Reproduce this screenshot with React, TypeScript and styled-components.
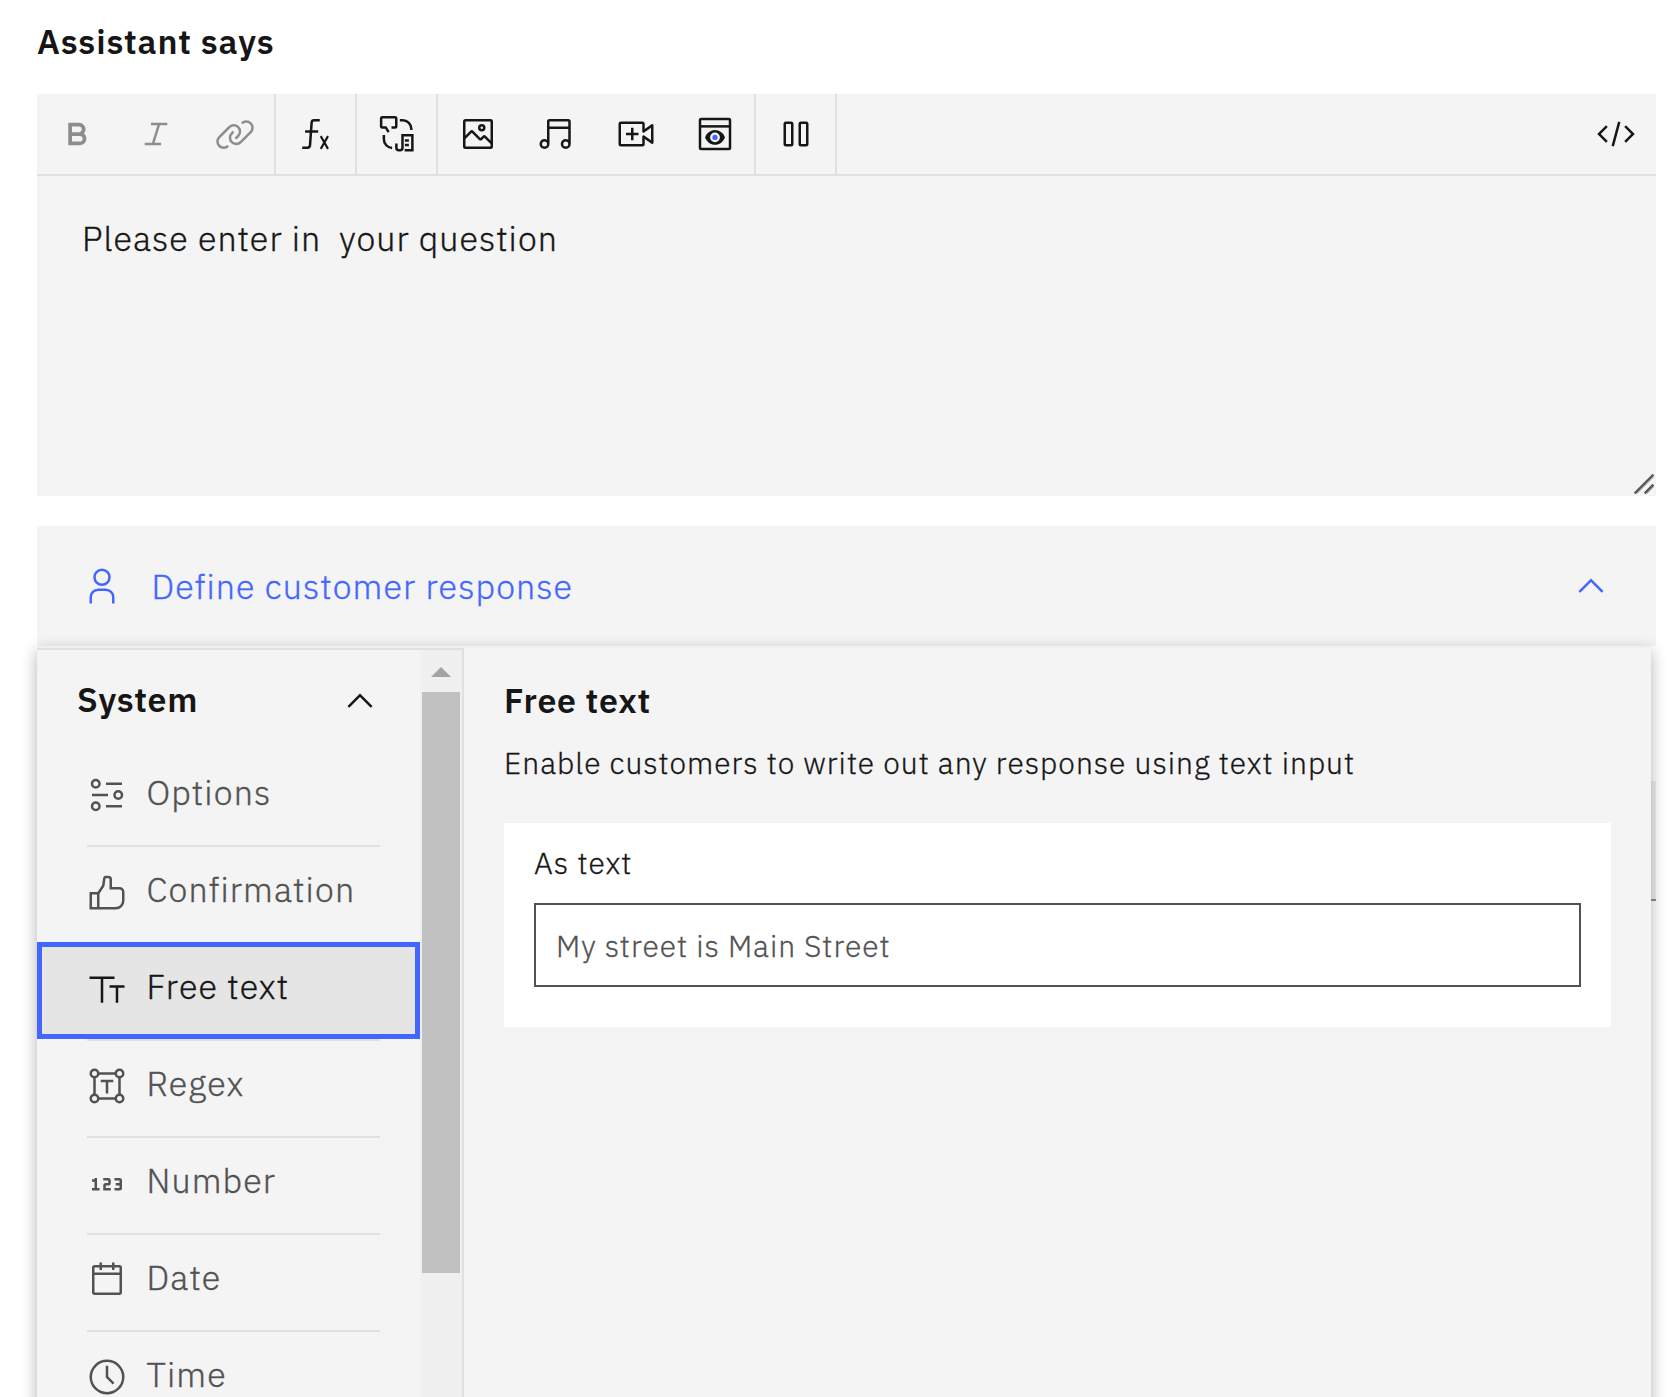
import React from 'react';
import styled, { createGlobalStyle } from 'styled-components';

const c = {
  ink: '#161616',
  muted: '#525252',
  disabled: '#8d8d8d',
  blue: '#4366ff',
  surface: '#f4f4f4',
  line: '#e0e0e0',
};

const GlobalStyle = createGlobalStyle`
  *, *::before, *::after { box-sizing: border-box; }
  html, body { margin: 0; padding: 0; overflow: hidden; background: #fff; }
  body { font-family: 'IBM Plex Sans', Roboto, 'Noto Sans', sans-serif; color: ${c.ink}; }
  h1, h2, p { margin: 0; }
  button, input { font: inherit; color: inherit; letter-spacing: inherit; }
`;

const Page = styled.main`
  display: flex;
  flex-direction: column;
  height: 1397px;
  padding: 20px 19px 0 37px;
  overflow: hidden;
`;

const Title = styled.h1`
  font-size: 34px;
  line-height: 42px;
  font-weight: 600;
  letter-spacing: 0.87px;
`;

const Editor = styled.section`
  display: flex;
  flex-direction: column;
  flex: none;
  height: 402px;
  margin-top: 32px;
  background: ${c.surface};
`;

const Toolbar = styled.div`
  display: flex;
  flex: none;
  height: 82px;
  border-bottom: 2px solid ${c.line};
`;

const ToolGroup = styled.div<{ $end?: boolean }>`
  display: flex;
  margin-left: ${p => (p.$end ? 'auto' : 0)};
  padding-right: ${p => (p.$end ? '1px' : 0)};
  border-right: ${p => (p.$end ? 'none' : `2px solid ${c.line}`)};
`;

const ToolButton = styled.button<{ $off?: boolean }>`
  display: flex;
  align-items: center;
  justify-content: center;
  width: 79px;
  height: 80px;
  padding: 0;
  border: 0;
  background: none;
  color: ${p => (p.$off ? c.disabled : c.ink)};
`;

const Glyph = styled.svg`
  display: block;
  flex: none;
  width: 40px;
  height: 40px;
  fill: currentColor;
  overflow: visible;
`;

const EditorBody = styled.div`
  display: flex;
  justify-content: space-between;
  flex: 1;
  padding: 39px 0 0 45px;
`;

const Message = styled.p`
  font-size: 34px;
  line-height: 47px;
  font-weight: 300;
  letter-spacing: 1.05px;
  white-space: pre;
  -webkit-text-stroke: 0.35px currentColor;
`;

const ResizeGrip = styled.svg`
  align-self: flex-end;
  width: 24px;
  height: 24px;
  fill: none;
`;

const ResponseHeader = styled.section`
  display: flex;
  align-items: center;
  flex: none;
  height: 120px;
  margin-top: 30px;
  padding: 0 45px;
  background: ${c.surface};
  color: ${c.blue};
`;

const ResponseTitle = styled.span`
  flex: 1;
  margin-left: 29.5px;
  font-size: 34px;
  line-height: 40px;
  font-weight: 300;
  letter-spacing: 1.12px;
  -webkit-text-stroke: 0.35px currentColor;
`;

const PanelArea = styled.section`
  position: relative;
  flex: 1;
  display: flex;
  margin-right: 5px;
`;

const CoveredField = styled.div`
  position: absolute;
  top: 135px;
  right: -5px;
  width: 60px;
  height: 120px;
  background: #eeeeee;
  border-bottom: 2px solid #8d8d8d;
`;

const Panel = styled.div`
  position: relative;
  display: flex;
  flex: 1;
  height: 1000px;
  border-top: 2px solid #f0f0f0;
  background: ${c.surface};
  box-shadow: 0 5px 15px rgba(0, 0, 0, 0.3);
`;

const Sidebar = styled.aside`
  display: flex;
  width: 427px;
  border-top: 2px solid ${c.line};
  border-right: 2px solid ${c.line};
`;

const TypeList = styled.nav`
  display: flex;
  flex-direction: column;
  width: 383px;
`;

const GroupHeader = styled.div`
  display: flex;
  align-items: center;
  justify-content: space-between;
  height: 98px;
  padding: 0 40px;
  & > svg { margin-top: 3px; }
`;

const GroupTitle = styled.h2`
  font-size: 34px;
  line-height: 40px;
  font-weight: 600;
  letter-spacing: 0.75px;
`;

const TypeItem = styled.div<{ $selected?: boolean; $first?: boolean }>`
  display: flex;
  flex: none;
  align-items: flex-start;
  height: 97px;
  padding: ${p => (p.$selected ? '0 0 0 45px' : '0 0 0 50px')};
  border: ${p => (p.$selected ? `5px solid ${c.blue}` : 'none')};
  background: ${p =>
    p.$selected ? '#e5e5e5' : p.$first ? 'none' : `linear-gradient(${c.line}, ${c.line}) 50px 0 / 293px 2px no-repeat`};
  color: ${p => (p.$selected ? c.ink : c.muted)};
  & > svg { margin-top: ${p => (p.$selected ? 22 : 27)}px; }
`;

const TypeLabel = styled.span<{ $selected?: boolean }>`
  margin: ${p => (p.$selected ? 18 : 23)}px 0 0 19.5px;
  font-size: 34px;
  line-height: 42px;
  font-weight: 300;
  letter-spacing: 1.13px;
  -webkit-text-stroke: 0.35px currentColor;
`;

const Scrollbar = styled.div`
  display: flex;
  flex-direction: column;
  align-items: center;
  width: 42px;
  padding-top: 17px;
  background: #f0f0f0;
`;

const ScrollUp = styled.div`
  border: 10px solid transparent;
  border-top: 0;
  border-bottom-color: #a3a3a3;
`;

const Thumb = styled.div`
  width: 38px;
  height: 581px;
  margin-top: 15px;
  background: #c1c1c1;
`;

const Detail = styled.div`
  flex: 1;
  padding: 32px 40px 0;
`;

const DetailTitle = styled.h2`
  font-size: 34px;
  line-height: 40px;
  font-weight: 600;
  letter-spacing: 0.75px;
`;

const Description = styled.p`
  margin-top: 25px;
  font-size: 30px;
  line-height: 36px;
  font-weight: 300;
  letter-spacing: 1.01px;
  -webkit-text-stroke: 0.3px currentColor;
`;

const Card = styled.div`
  height: 204px;
  margin-top: 42px;
  padding: 22px 30px 0;
  background: #fff;
`;

const FieldLabel = styled.label`
  display: block;
  height: 58px;
  font-size: 30px;
  line-height: 36px;
  font-weight: 300;
  letter-spacing: 1.08px;
  -webkit-text-stroke: 0.3px currentColor;
`;

const Field = styled.input`
  display: block;
  width: 100%;
  height: 84px;
  padding: 0 20px;
  border: 2px solid ${c.muted};
  border-radius: 0;
  background: #fff;
  font-size: 30px;
  font-weight: 300;
  letter-spacing: 1px;
  -webkit-text-stroke: 0.3px currentColor;
  &::placeholder { color: ${c.muted}; opacity: 1; }
`;

const fine = { fill: 'none', stroke: 'currentColor', strokeWidth: 2 };

const icons: Record<string, React.ReactNode> = {
  bold: <path d="M18.25,25H9V7h8.5a5.25,5.25,0,0,1,4,8.65A5.25,5.25,0,0,1,18.25,25ZM12,22h6.23a2.25,2.25,0,1,0,0-4.5H12Zm0-7.5h5.5a2.25,2.25,0,1,0,0-4.5H12Z" />,
  italic: <path d="M25 9V7H12v2h5.14l-4.37 14H7v2h13v-2h-5.14l4.37-14z" />,
  link: (
    <>
      <path d="M29.25,6.76a6,6,0,0,0-8.5,0l1.42,1.42a4,4,0,1,1,5.67,5.67l-8,8a4,4,0,1,1-5.67-5.66l1.41-1.42-1.41-1.42-1.42,1.42a6,6,0,0,0,0,8.5A6,6,0,0,0,17,25a6,6,0,0,0,4.27-1.76l8-8A6,6,0,0,0,29.25,6.76Z" />
      <path d="M4.19,24.82a4,4,0,0,1,0-5.67l8-8a4,4,0,0,1,5.67,0A3.94,3.94,0,0,1,19,14a4,4,0,0,1-1.17,2.85L15.71,19l1.42,1.42,2.12-2.12a6,6,0,0,0-8.51-8.51l-8,8a6,6,0,0,0,0,8.51A6,6,0,0,0,7,28a6.07,6.07,0,0,0,4.28-1.76L9.86,24.82A4,4,0,0,1,4.19,24.82Z" />
    </>
  ),
  fx: (
    <g {...fine}>
      <path d="M19 5h-4.500a2 2 0 0 0-2 1.850L11.200 25.150a2 2 0 0 1-2 1.850H5M7.300 14H17.700" />
      <path d="M19.800 17.700l5.800 10.200M25.600 17.700l-5.800 10.200" strokeWidth="1.700" />
    </g>
  ),
  channel: (
    <g {...fine}>
      <path d="M11.6 10.7h2.8a1 1 0 0 0 1-1V3.6a1 1 0 0 0-1-1H4.3a1 1 0 0 0-1 1v6.1a1 1 0 0 0 1 1H7l2.3 3.8" />
      <path d="M18.3 5h2.2a7 7 0 0 1 7 7v.8M5.5 16.8V20.2a7 7 0 0 0 6.6 7" />
      <path d="M15.5 23.6V27a2 2 0 0 0 2 2h.9a2 2 0 0 0 2-2V17h7.9v12h-6.2M22.3 21.1h3.2M22.3 24.8h3.2" />
    </g>
  ),
  image: (
    <>
      <path d="M19,14a3,3,0,1,0-3-3A3,3,0,0,0,19,14Zm0-4a1,1,0,1,1-1,1A1,1,0,0,1,19,10Z" />
      <path d="M26,4H6A2,2,0,0,0,4,6V26a2,2,0,0,0,2,2H26a2,2,0,0,0,2-2V6A2,2,0,0,0,26,4Zm0,22H6V20l5-5,5.59,5.59a2,2,0,0,0,2.82,0L21,19l5,5Zm0-4.83-3.59-3.59a2,2,0,0,0-2.82,0L18,19.17l-5.59-5.59a2,2,0,0,0-2.82,0L6,17.17V6H26Z" />
    </>
  ),
  music: <path d="M25,4H10A2,2,0,0,0,8,6V20.56A3.96,3.96,0,0,0,6,20a4,4,0,1,0,4,4V12H25v8.56A3.95,3.95,0,0,0,23,20a4,4,0,1,0,4,4V6A2,2,0,0,0,25,4ZM6,26a2,2,0,1,1,2-2A2,2,0,0,1,6,26Zm17,0a2,2,0,1,1,2-2A2,2,0,0,1,23,26ZM10,6H25v4H10Z" />,
  video: (
    <>
      <path d="M18 15h-4v-4h-2v4H8v2h4v4h2v-4h4z" />
      <path d="M21,26H4a2,2,0,0,1-2-2V8A2,2,0,0,1,4,6H21a2,2,0,0,1,2,2v4.06l5.42-3.87A1,1,0,0,1,30,9V23a1,1,0,0,1-1.58.81L23,19.94V24A2,2,0,0,1,21,26ZM4,8V24H21V18a1,1,0,0,1,1.58-.81L28,21.06V10.94l-5.42,3.87A1,1,0,0,1,21,14V8Z" />
    </>
  ),
  webview: (
    <>
      <rect x="4" y="4" width="24" height="24" rx="1" {...fine} />
      <path d="M4 9.9h24" {...fine} />
      <path d="M8 18.7c1.5-3.6 4.5-5.9 8-5.9s6.5 2.3 8 5.9c-1.5 3.6-4.5 5.9-8 5.9s-6.5-2.3-8-5.9z" />
      <circle cx="16" cy="18.7" r="3.9" fill={c.surface} />
      <circle cx="16" cy="18.7" r="2.1" fill={c.blue} />
    </>
  ),
  pause: <path d="M12,8V24H8V8h4m0-2H8A2,2,0,0,0,6,8V24a2,2,0,0,0,2,2h4a2,2,0,0,0,2-2V8A2,2,0,0,0,12,6ZM24,8V24H20V8h4m0-2H20a2,2,0,0,0-2,2V24a2,2,0,0,0,2,2h4a2,2,0,0,0,2-2V8A2,2,0,0,0,24,6Z" />,
  code: <path d="M31 16l-7 7-1.41-1.41L28.17 16l-5.58-5.59L24 9zM1 16l7-7 1.41 1.41L3.83 16l5.58 5.59L8 23zM12.42 25.48L17.64 6l1.93.52L14.35 26z" />,
  user: <path d="M16 4a5 5 0 1 1-5 5 5 5 0 0 1 5-5m0-2a7 7 0 1 0 7 7A7 7 0 0 0 16 2zM26 30H24V25a5 5 0 0 0-5-5H13a5 5 0 0 0-5 5v5H6V25a7 7 0 0 1 7-7h6a7 7 0 0 1 7 7z" />,
  chevron: <path d="M16 10L26 20l-1.4 1.4L16 12.8l-8.6 8.6L6 20z" />,
  options: (
    <g {...fine}>
      <circle cx="7" cy="7" r="3" />
      <circle cx="25" cy="16" r="3" />
      <circle cx="7" cy="25" r="3" />
      <path d="M15.2 7H28M4 16h12.8M15.2 25H28" />
    </g>
  ),
  thumb: <path d="M26,12H20V6a3,3,0,0,0-3-3H14.87a2,2,0,0,0-1.98,1.72l-.85,5.92L8.46,16H2V30H23a7,7,0,0,0,7-7V16A4,4,0,0,0,26,12ZM8,28H4V18H8Zm20-5a5,5,0,0,1-5,5H10V17.3l3.96-5.94L14.87,5H17a1,1,0,0,1,1,1v8h8a2,2,0,0,1,2,2Z" />,
  text: <path d="M2 6h20v2h-9v19h-2V8H2zM18 13h12v2h-5v12h-2V15h-5z" />,
  regex: (
    <g {...fine}>
      <circle cx="6" cy="6" r="3" />
      <circle cx="26" cy="6" r="3" />
      <circle cx="6" cy="26" r="3" />
      <circle cx="26" cy="26" r="3" />
      <path d="M9 6h14M9 26h14M6 9v14M26 9v14M11 12h10M16 12v10" />
    </g>
  ),
  number: (
    <path d="M26,12H22v2h4v2H23v2h3v2H22v2h4a2,2,0,0,0,2-2V14A2,2,0,0,0,26,12ZM19,22H13V18a2,2,0,0,1,2-2h2V14H13V12h4a2,2,0,0,1,2,2v2a2,2,0,0,1-2,2H15v2h4ZM8 20V12H6v1H4v2h2v5H4v2h6v-2z" />
  ),
  date: <path d="M26,4h-4V2h-2v2h-8V2h-2v2H6C4.9,4,4,4.9,4,6v20c0,1.1,.9,2,2,2h20c1.1,0,2-.9,2-2V6C28,4.9,27.1,4,26,4zM26,26H6V12h20V26zM26,10H6V6h4v2h2V6h8v2h2V6h4V10z" />,
  time: <path d="M16,30A14,14,0,1,1,30,16,14,14,0,0,1,16,30ZM16,4A12,12,0,1,0,28,16,12,12,0,0,0,16,4ZM20.59 22L15 16.41V7h2v8.58l5 5.01z" />,
};

const Icon = ({ name }: { name: string }) => (
  <Glyph viewBox="0 0 32 32" aria-hidden="true">
    {icons[name]}
  </Glyph>
);

const toolGroups = [['bold', 'italic', 'link'], ['fx'], ['channel'], ['image', 'music', 'video', 'webview'], ['pause']];
const disabledTools = ['bold', 'italic', 'link'];

const types = [
  { icon: 'options', label: 'Options' },
  { icon: 'thumb', label: 'Confirmation' },
  { icon: 'text', label: 'Free text' },
  { icon: 'regex', label: 'Regex' },
  { icon: 'number', label: 'Number' },
  { icon: 'date', label: 'Date' },
  { icon: 'time', label: 'Time' },
];

export default function App() {
  return (
    <>
      <GlobalStyle />
      <Page>
        <Title>Assistant says</Title>
        <Editor>
          <Toolbar>
            {toolGroups.map(group => (
              <ToolGroup key={group[0]}>
                {group.map(name => (
                  <ToolButton key={name} $off={disabledTools.includes(name)} aria-label={name}>
                    <Icon name={name} />
                  </ToolButton>
                ))}
              </ToolGroup>
            ))}
            <ToolGroup $end>
              <ToolButton aria-label="code">
                <Icon name="code" />
              </ToolButton>
            </ToolGroup>
          </Toolbar>
          <EditorBody>
            <Message>{'Please enter in  your question'}</Message>
            <ResizeGrip viewBox="0 0 24 24">
              <path d="M6 22L22 6M16 22L22 16" stroke="#fff" strokeWidth="2" />
              <path d="M5 21.500L22 4.500M15 21.500L22 14.500" stroke="#bbb" strokeWidth="1.500" />
              <path d="M3.500 20.500L20.500 3.500M13.500 20.500L20.500 13.500" stroke="#555" strokeWidth="2.300" strokeLinecap="square" />
            </ResizeGrip>
          </EditorBody>
        </Editor>
        <ResponseHeader>
          <Icon name="user" />
          <ResponseTitle>Define customer response</ResponseTitle>
          <Icon name="chevron" />
        </ResponseHeader>
        <PanelArea>
          <CoveredField />
          <Panel>
            <Sidebar>
              <TypeList>
                <GroupHeader>
                  <GroupTitle>System</GroupTitle>
                  <Icon name="chevron" />
                </GroupHeader>
                {types.map((t, i) => {
                  const selected = t.label === 'Free text';
                  return (
                    <TypeItem key={t.label} $selected={selected} $first={i === 0}>
                      <Icon name={t.icon} />
                      <TypeLabel $selected={selected}>{t.label}</TypeLabel>
                    </TypeItem>
                  );
                })}
              </TypeList>
              <Scrollbar>
                <ScrollUp />
                <Thumb />
              </Scrollbar>
            </Sidebar>
            <Detail>
              <DetailTitle>Free text</DetailTitle>
              <Description>Enable customers to write out any response using text input</Description>
              <Card>
                <FieldLabel htmlFor="sample">As text</FieldLabel>
                <Field id="sample" placeholder="My street is Main Street" />
              </Card>
            </Detail>
          </Panel>
        </PanelArea>
      </Page>
    </>
  );
}
